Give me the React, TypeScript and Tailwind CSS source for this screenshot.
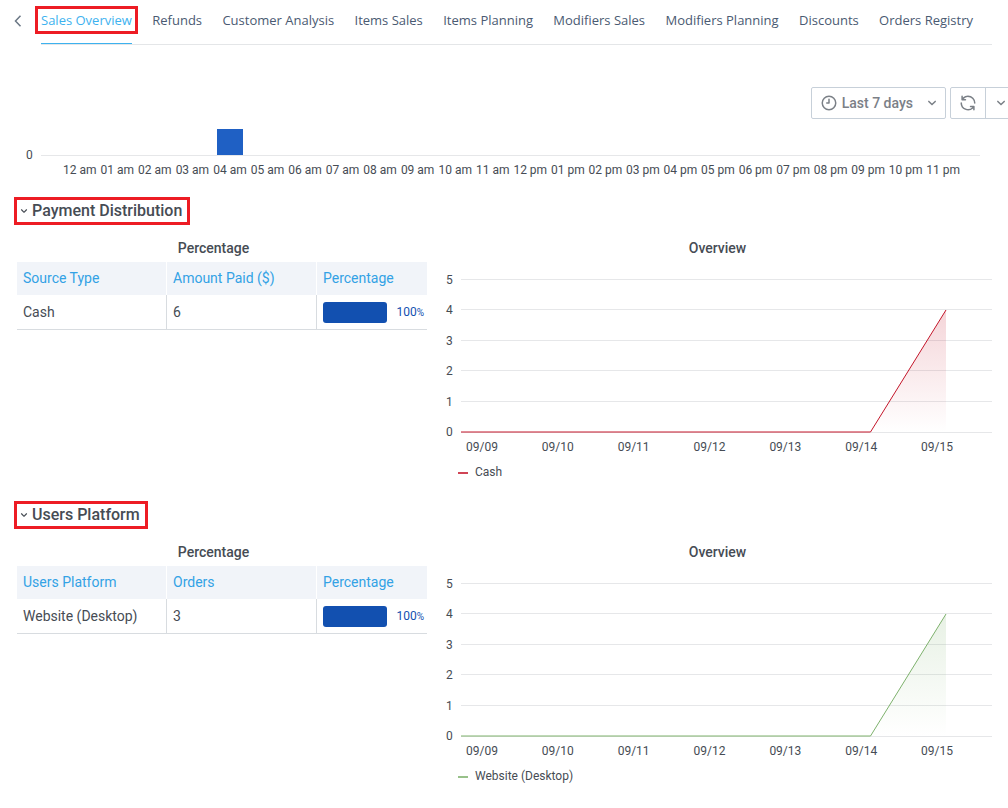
import { useState } from 'react'

const tabs = [
  'Sales Overview',
  'Refunds',
  'Customer Analysis',
  'Items Sales',
  'Items Planning',
  'Modifiers Sales',
  'Modifiers Planning',
  'Discounts',
  'Orders Registry',
]

const hours = ['am', 'pm'].flatMap((half) =>
  [12, 1, 2, 3, 4, 5, 6, 7, 8, 9, 10, 11].map((h) => `${String(h).padStart(2, '0')} ${half}`),
)

const days = ['09/09', '09/10', '09/11', '09/12', '09/13', '09/14', '09/15']

const sections = [
  {
    id: 'payment',
    title: 'Payment Distribution',
    columns: ['Source Type', 'Amount Paid ($)', 'Percentage'],
    name: 'Cash',
    value: '6',
    percent: 100,
    line: '#c4162a',
    fillOpacity: 0.18,
  },
  {
    id: 'platform',
    title: 'Users Platform',
    columns: ['Users Platform', 'Orders', 'Percentage'],
    name: 'Website (Desktop)',
    value: '3',
    percent: 100,
    line: '#7eb26d',
    fillOpacity: 0.18,
  },
]

const icons = {
  angleDown:
    'M17,9.17a1,1,0,0,0-1.41,0L12,12.71,8.46,9.17a1,1,0,0,0-1.41,0,1,1,0,0,0,0,1.42l4.24,4.24a1,1,0,0,0,1.42,0L17,10.59A1,1,0,0,0,17,9.17Z',
  clock:
    'M12,2A10,10,0,1,0,22,12,10,10,0,0,0,12,2Zm0,18a8,8,0,1,1,8-8A8,8,0,0,1,12,20ZM12,6a1,1,0,0,0-1,1v4H9a1,1,0,0,0,0,2h3a1,1,0,0,0,1-1V7A1,1,0,0,0,12,6Z',
  sync: 'M19.91,15.51H15.38a1,1,0,0,0,0,2h2.4A8,8,0,0,1,4,12a1,1,0,1,0-2,0,10,10,0,0,0,16.88,7.23V21a1,1,0,0,0,2,0V16.5A1,1,0,0,0,19.91,15.51ZM12,2A10,10,0,0,0,5.12,4.77V3a1,1,0,0,0-2,0V7.5a1,1,0,0,0,1,1h4.5a1,1,0,0,0,0-2H6.22A8,8,0,0,1,20,12a1,1,0,0,0,2,0A10,10,0,0,0,12,2Z',
}

function Icon({ name, className }: { name: keyof typeof icons; className: string }) {
  return (
    <svg className={`shrink-0 ${className}`} viewBox="0 0 24 24" fill="currentColor" aria-hidden="true">
      <path d={icons[name]} />
    </svg>
  )
}

function TabBar() {
  return (
    <nav className="flex pr-4 pl-[13px] font-['Open_Sans','Noto_Sans',sans-serif] text-[13px] text-[#4a5a72]">
      <button type="button" aria-label="Previous tabs" className="flex h-[42px] w-7 items-center">
        <svg className="h-3 w-3 text-[#6b7785]" viewBox="0 0 12 12" fill="none" stroke="currentColor" strokeWidth={1.5}>
          <path d="M7.5 0.8 L2.5 6 L7.5 11.2" />
        </svg>
      </button>
      <div className="flex flex-1 justify-between border-b border-[#e4e6e8] pr-[19px]">
        {tabs.map((tab, i) => (
          <a
            key={tab}
            href="#"
            className={
              i === 0
                ? 'flex h-11 flex-col border-b border-[#3db2ef] pt-3 whitespace-nowrap text-[#3db2ef]'
                : 'flex h-11 flex-col pt-3 whitespace-nowrap'
            }
          >
            <span className={i === 0 ? 'leading-4 outline-3 outline-offset-3 outline-[#ed1c24]' : 'leading-4'}>{tab}</span>
          </a>
        ))}
      </div>
    </nav>
  )
}

function Toolbar() {
  return (
    <div className="mt-[42px] flex justify-end gap-1 overflow-hidden text-[#7b8087]">
      <button type="button" className="flex h-8 items-center rounded-xs border border-[#c7d0d9] pr-1 pl-2 text-sm font-medium">
        <Icon name="clock" className="h-[18px] w-[18px]" />
        <span className="ml-1">Last 7 days</span>
        <Icon name="angleDown" className="ml-2.5 h-[18px] w-[18px]" />
      </button>
      <div className="-mr-[9px] flex">
        <button type="button" aria-label="Refresh" className="flex h-8 w-9 items-center justify-center rounded-l-xs border border-[#c7d0d9]">
          <Icon name="sync" className="h-[18px] w-[18px]" />
        </button>
        <button type="button" aria-label="Refresh interval" className="-ml-px flex h-8 w-8 items-center justify-center border border-[#c7d0d9]">
          <Icon name="angleDown" className="h-[18px] w-[18px]" />
        </button>
      </div>
    </div>
  )
}

function HourlyChart() {
  return (
    <div className="mt-2.5 pr-7 pl-[26px] text-xs">
      <div className="flex items-end">
        <span className="-mb-[5px] w-[15px] leading-3">0</span>
        <div className="grid flex-1 grid-cols-24 border-b border-[#e6e7e9] pr-[18px] pl-5">
          {hours.map((hour) => (
            <div key={hour} className="flex h-[26px] justify-center">
              {hour === '04 am' && <div className="h-full w-[26px] bg-[#1f60c4]" />}
            </div>
          ))}
        </div>
      </div>
      <div className="mt-1 grid h-5 grid-cols-24 items-center pr-[18px] pl-[35px]">
        {hours.map((hour) => (
          <span key={hour} className="flex justify-center whitespace-nowrap">
            {hour}
          </span>
        ))}
      </div>
    </div>
  )
}

function TrendChart({ id, name, line, fillOpacity }: { id: string; name: string; line: string; fillOpacity: number }) {
  return (
    <div className="pt-[17px] pr-4 pl-[17px] text-xs">
      <div className="flex">
        <div className="-my-[5px] flex w-[17px] flex-col justify-between pl-0.5 leading-3">
          {[5, 4, 3, 2, 1, 0].map((n) => (
            <span key={n}>{n}</span>
          ))}
        </div>
        <svg className="h-[154px] min-w-0 flex-1" viewBox="0 0 531 154" preserveAspectRatio="none" role="img" aria-label={name}>
          <defs>
            <linearGradient id={`fill-${id}`} x1="0" y1="0" x2="0" y2="1">
              <stop offset="0" stopColor={line} stopOpacity={fillOpacity} />
              <stop offset="1" stopColor={line} stopOpacity={0} />
            </linearGradient>
          </defs>
          {[0, 30, 61, 91, 122, 153].map((y) => (
            <rect key={y} x={0} y={y} width={531} height={1} fill="#e6e7e9" />
          ))}
          <path d="M409.5 153 L485 31 V153 Z" fill={`url(#fill-${id})`} />
          <path d="M0 153 H409.5 L485 31" fill="none" stroke={line} strokeWidth={1} vectorEffect="non-scaling-stroke" />
        </svg>
      </div>
      <div className="mt-1 mr-[17px] grid h-5 grid-cols-7 items-center text-center">
        {days.map((day) => (
          <span key={day}>{day}</span>
        ))}
      </div>
      <div className="mt-[5px] flex h-5 items-center gap-[7px] pl-3.5">
        <span className="mt-0.5 h-0.5 w-2.5 opacity-80" style={{ backgroundColor: line }} />
        {name}
      </div>
    </div>
  )
}

function Section({ section }: { section: (typeof sections)[number] }) {
  const [open, setOpen] = useState(true)

  return (
    <section className="mb-[19px]">
      <h2 className="flex pl-3.5">
        <button
          type="button"
          aria-expanded={open}
          onClick={() => setOpen(!open)}
          className="flex h-7 items-center gap-px border-3 border-[#ed1c24] pr-[5px] text-base leading-5 font-medium"
        >
          <Icon name="angleDown" className="h-3.5 w-3.5" />
          {section.title}
        </button>
      </h2>
      {open && (
        <div className="mt-[9px] grid grid-cols-[427fr_581fr]">
          <div>
            <h3 className="flex h-7 items-center justify-center text-sm font-medium">Percentage</h3>
            <div className="pl-[17px]">
              <table className="w-full table-fixed border-separate border-spacing-0 text-left text-sm">
                <thead>
                  <tr className="h-[33px] bg-[#f1f4f9] text-[#33a2e5]">
                    <th className="w-[150px] border-r border-white px-1.5 pb-px font-normal">{section.columns[0]}</th>
                    <th className="w-[150px] border-r border-white px-1.5 pb-px font-normal">{section.columns[1]}</th>
                    <th className="px-1.5 pb-px font-normal">{section.columns[2]}</th>
                  </tr>
                </thead>
                <tbody>
                  <tr className="h-[35px]">
                    <td className="border-r border-b border-[#d8dce0] px-1.5">{section.name}</td>
                    <td className="border-r border-b border-[#d8dce0] px-1.5">{section.value}</td>
                    <td className="border-b border-[#d8dce0] pr-[3px] pl-1.5">
                      <div className="flex items-center gap-[9px] text-xs text-[#1250b0]">
                        <div className="h-[21px] flex-1">
                          <div className="h-full rounded-[3px] bg-[#1250b0]" style={{ width: `${section.percent}%` }} />
                        </div>
                        <span>
                          {section.percent}
                          <span className="text-[10px]">%</span>
                        </span>
                      </div>
                    </td>
                  </tr>
                </tbody>
              </table>
            </div>
          </div>
          <div>
            <h3 className="flex h-7 items-center justify-center text-sm font-medium">Overview</h3>
            <TrendChart id={section.id} name={section.name} line={section.line} fillOpacity={section.fillOpacity} />
          </div>
        </div>
      )}
    </section>
  )
}

export default function App() {
  return (
    <div className="min-h-screen overflow-hidden bg-white font-[Roboto,sans-serif] text-[#464c54]">
      <TabBar />
      <Toolbar />
      <HourlyChart />
      <main className="mt-[17px]">
        {sections.map((section) => (
          <Section key={section.id} section={section} />
        ))}
      </main>
    </div>
  )
}
